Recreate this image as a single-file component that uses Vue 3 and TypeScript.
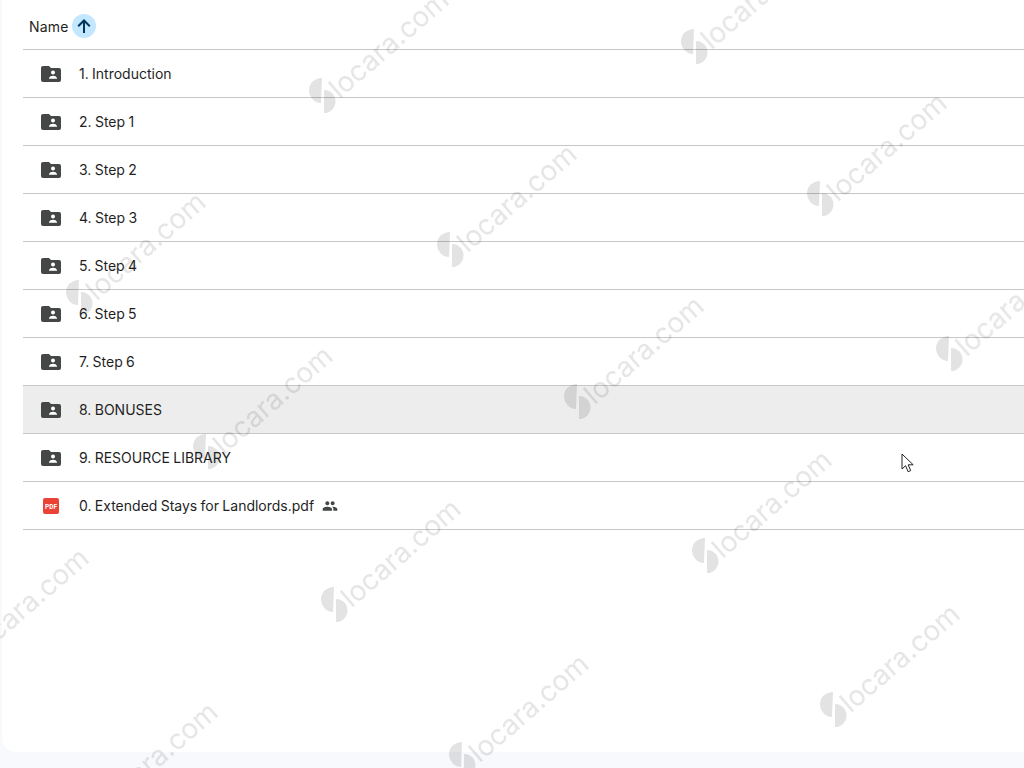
<script setup lang="ts">
interface Row {
  name: string
  hovered?: boolean
}

const folders: Row[] = [
  { name: '1. Introduction' },
  { name: '2. Step 1' },
  { name: '3. Step 2' },
  { name: '4. Step 3' },
  { name: '5. Step 4' },
  { name: '6. Step 5' },
  { name: '7. Step 6' },
  { name: '8. BONUSES', hovered: true },
  { name: '9. RESOURCE LIBRARY' },
]

// logo centre of each watermark stamp
const stamps: [number, number][] = [
  [695, 47], [323, 96], [821, 199], [451, 250], [80, 298], [950, 354], [578, 402],
  [207, 452], [706, 556], [335, 605], [-37, 654], [834, 710], [463, 760], [92, 808],
]
</script>

<template>
  <div class="page">
    <main class="card">
      <div class="list">
        <div class="head">
          <span class="head-label">Name</span>
          <span class="sort">
            <svg width="16" height="16" viewBox="0 0 16 16"><path d="M8 15V2.5M2.2 8.3 8 2.5l5.8 5.8" fill="none" stroke="#04355a" stroke-width="2" /></svg>
          </span>
        </div>
        <div v-for="row in folders" :key="row.name" class="row" :class="{ hovered: row.hovered }">
          <span class="icon">
            <svg width="20" height="16" viewBox="0 0 20 16">
              <path d="M2 0h6l2 2h8a2 2 0 0 1 2 2v10a2 2 0 0 1-2 2H2a2 2 0 0 1-2-2V2a2 2 0 0 1 2-2z" fill="#444746" />
              <circle cx="12" cy="6.6" r="2" fill="#fff" />
              <path d="M8 12.2c0-1.7 2.6-2.5 4-2.5s4 .8 4 2.5v.6H8z" fill="#fff" />
            </svg>
          </span>
          <span class="name">{{ row.name }}</span>
        </div>
        <div class="row">
          <span class="icon">
            <svg width="16" height="16" viewBox="0 0 16 16">
              <rect width="16" height="16" rx="2" fill="#ea4335" />
              <text x="8" y="10.6" text-anchor="middle" class="pdf-tag">PDF</text>
            </svg>
          </span>
          <span class="name">0. Extended Stays for Landlords.pdf</span>
          <svg class="shared" width="16" height="16" viewBox="0 0 24 24">
            <path fill="#444746" d="M16 11c1.66 0 2.99-1.34 2.99-3S17.66 5 16 5s-3 1.34-3 3 1.34 3 3 3zm-8 0c1.66 0 2.99-1.34 2.99-3S9.66 5 8 5 5 6.34 5 8s1.34 3 3 3zm0 2c-2.33 0-7 1.17-7 3.5V19h14v-2.5C15 14.17 10.33 13 8 13zm8 0c-.29 0-.62.02-.97.05 1.16.84 1.97 1.97 1.97 3.45V19h6v-2.5c0-2.33-4.67-3.5-7-3.5z" />
          </svg>
        </div>
      </div>
    </main>

    <div class="stamps">
      <div v-for="(s, i) in stamps" :key="i" class="stamp" :style="{ left: s[0] + 'px', top: s[1] + 'px' }">
        <svg class="stamp-logo" width="28" height="36" viewBox="0 0 28 36">
          <path d="M13 0A12.5 12.5 0 0 0 12 25z" />
          <path d="M15 12A11.5 11.5 0 0 1 15 35z" />
        </svg>
        <span class="stamp-text">locara.com</span>
      </div>
    </div>

    <svg class="pointer" width="14" height="20" viewBox="0 0 14 20">
      <path d="M1 1v15l3.6-3.3 2.5 6 2.6-1.1-2.5-5.8h5z" fill="#fff" stroke="#222" stroke-width="1" />
    </svg>
  </div>
</template>

<style scoped>
.page {
  position: relative;
  width: 1024px;
  height: 768px;
  overflow: hidden;
  background: #f7f9fd;
  font-family: Inter, Roboto, sans-serif;
}

.card {
  height: 752px;
  margin-left: 2px;
  padding-left: 21px;
  box-sizing: border-box;
  background: #fff;
  border-bottom-left-radius: 14px;
}

.head {
  display: flex;
  align-items: center;
  gap: 3px;
  height: 50px;
  padding: 3px 0 0 6px;
  box-sizing: border-box;
  border-bottom: 1px solid #c7c7c7;
}

.head-label {
  font-size: 14px;
  color: #1f1f1f;
  letter-spacing: 0.2px;
}

.sort {
  display: flex;
  align-items: center;
  justify-content: center;
  width: 24px;
  height: 24px;
  border-radius: 50%;
  background: #c2e7ff;
}

.row {
  display: flex;
  align-items: center;
  height: 48px;
  box-sizing: border-box;
  border-bottom: 1px solid #c7c7c7;
}

.row.hovered {
  background: #ededed;
}

.icon {
  display: flex;
  justify-content: center;
  width: 56px;
}

.name {
  font-size: 14px;
  word-spacing: -0.6px;
  color: #1f1f1f;
}

.pdf-tag {
  font-size: 6.5px;
  font-weight: 700;
  fill: #fff;
  font-family: Roboto, sans-serif;
}

.shared {
  margin-left: 8px;
}

.stamps {
  position: absolute;
  inset: 0;
  pointer-events: none;
  mix-blend-mode: multiply;
  filter: blur(0.5px);
}

.stamp {
  position: absolute;
  width: 0;
  height: 0;
}

.stamp-logo {
  position: absolute;
  left: -14px;
  top: -18px;
  fill: #e3e3e3;
}

.stamp-text {
  position: absolute;
  left: 10px;
  top: -18px;
  font-family: Inter, sans-serif;
  font-size: 28px;
  line-height: 28px;
  white-space: nowrap;
  color: #e6e6e6;
  transform: rotate(-41deg);
  transform-origin: 0 50%;
}

.pointer {
  position: absolute;
  left: 901px;
  top: 453px;
}
</style>
